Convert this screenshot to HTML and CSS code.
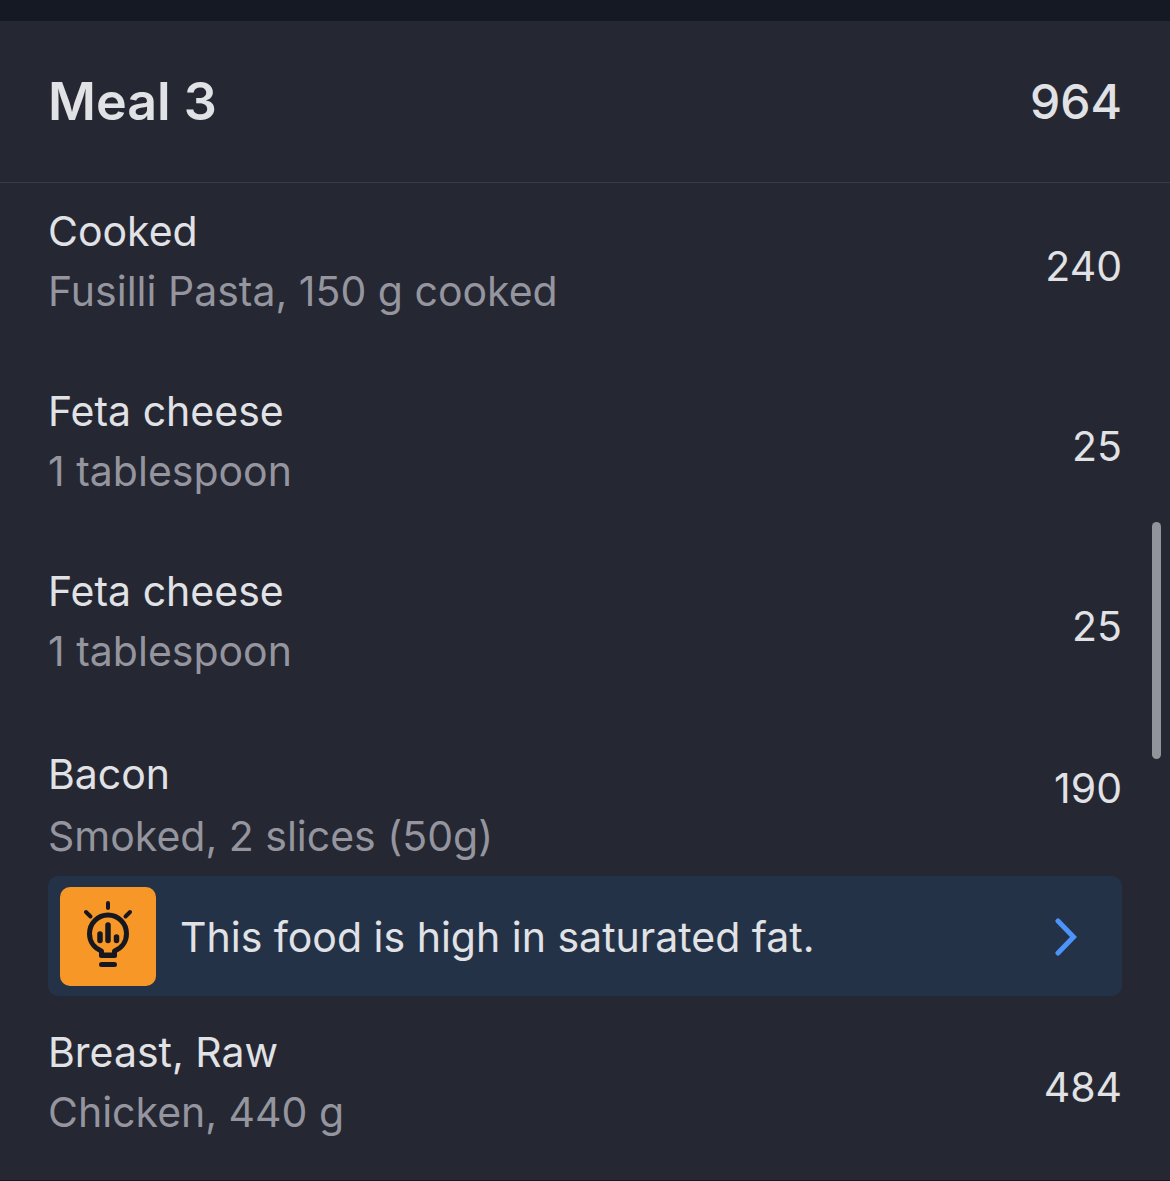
FILE: index.html
```
<!DOCTYPE html>
<html lang="en">
<head>
  <meta charset="UTF-8">
  <meta name="viewport" content="width=device-width, initial-scale=1.0">
  <title>Food Diary</title>
  <link rel="stylesheet" href="styles.css">
</head>
<body>
  <main class="diary">
    <section class="meal">
      <header class="meal-header">
        <h2>Meal 3</h2>
        <span class="meal-total">964</span>
      </header>

      <ul class="food-list">
        <li class="food">
          <div class="food-row">
            <div class="food-info">
              <p class="food-name">Cooked</p>
              <p class="food-detail">Fusilli Pasta, 150 g cooked</p>
            </div>
            <span class="calories">240</span>
          </div>
        </li>
        <li class="food">
          <div class="food-row">
            <div class="food-info">
              <p class="food-name">Feta cheese</p>
              <p class="food-detail">1 tablespoon</p>
            </div>
            <span class="calories">25</span>
          </div>
        </li>
        <li class="food">
          <div class="food-row">
            <div class="food-info">
              <p class="food-name">Feta cheese</p>
              <p class="food-detail">1 tablespoon</p>
            </div>
            <span class="calories">25</span>
          </div>
        </li>
        <li class="food has-tip">
          <div class="food-row">
            <div class="food-info">
              <p class="food-name">Bacon</p>
              <p class="food-detail">Smoked, 2 slices (50g)</p>
            </div>
            <span class="calories">190</span>
          </div>
          <button type="button" class="tip">
            <span class="tip-icon">
              <svg viewBox="0 0 96 99" width="96" height="99" fill="none" stroke="#17181f" stroke-linecap="round" stroke-linejoin="round" aria-hidden="true">
                <path d="M48 16v5M26 25l4.500 4.500M70 25l-4.500 4.500" stroke-width="4"/>
                <path d="M41.500 68v-4C34 61 29.500 54.500 29.500 46.500a18.500 18.500 0 0 1 37 0C66.500 54.500 62 61 54.500 64v4Z" stroke-width="5"/>
                <path d="M40 47v6.500M48 38v15.500M56.500 50v3.500" stroke-width="5.500"/>
                <path d="M41.500 68.500h13M41.500 77.500h13" stroke-width="5"/>
              </svg>
            </span>
            <span class="tip-text">This food is high in saturated fat.</span>
            <svg class="chevron" viewBox="0 0 24 38" width="24" height="38" fill="none" stroke="#4c94fa" stroke-width="5" stroke-linecap="round" aria-hidden="true">
              <path d="M4 3l15.500 16L4 35"/>
            </svg>
          </button>
        </li>
        <li class="food">
          <div class="food-row">
            <div class="food-info">
              <p class="food-name">Breast, Raw</p>
              <p class="food-detail">Chicken, 440 g</p>
            </div>
            <span class="calories">484</span>
          </div>
        </li>
      </ul>
    </section>
    <div class="scroll-thumb"></div>
  </main>
</body>
</html>
```
FILE: styles.css
```
* {
  box-sizing: border-box;
}
body {
  margin: 0;
  background-color: #151923;
  color: #e1e2e5;
  font-family: Inter, "Liberation Sans", sans-serif;
  font-size: 41px;
}
h2, p, ul {
  margin: 0;
  padding: 0;
}
.diary {
  position: relative;
  padding-top: 21px;
}
.meal {
  background: #252732;
  padding-bottom: 28px;
}
.meal-header {
  display: flex;
  justify-content: space-between;
  align-items: center;
  padding: 49px 48px 48px;
  line-height: 64px;
  border-bottom: 1px solid #393b46;
}
.meal-header h2 {
  font-size: 52px;
  font-weight: 600;
}
.meal-total {
  font-size: 48px;
  font-weight: 500;
}

/* Food rows */
.food-list {
  display: flex;
  flex-direction: column;
  gap: 50px;
  padding: 18px 48px 0;
  list-style: none;
}
.food-row {
  display: flex;
  justify-content: space-between;
  align-items: center;
  line-height: 60px;
}
.food-info {
  padding-bottom: 10px;
}
.food-detail {
  color: #94959e;
}
.has-tip {
  padding-top: 2px;
  margin-bottom: -24px;
}
.has-tip .food-row {
  align-items: flex-start;
  line-height: 62px;
}
.has-tip .food-info {
  padding-bottom: 9px;
}
.has-tip .calories {
  padding-top: 14px;
}

/* Nutrition tip */
.tip {
  display: flex;
  align-items: center;
  width: 100%;
  padding: 11px 44px 10px 12px;
  border: none;
  border-radius: 10px;
  background: #243248;
  color: inherit;
  font: inherit;
  text-align: left;
  cursor: pointer;
}
.tip-icon {
  display: flex;
  margin-right: 24px;
  border-radius: 10px;
  background: #f79727;
}
.tip-text {
  flex: 1;
}

.scroll-thumb {
  position: absolute;
  top: 522px;
  right: 9px;
  width: 9px;
  height: 237px;
  border-radius: 5px;
  background: #92949b;
}
```
